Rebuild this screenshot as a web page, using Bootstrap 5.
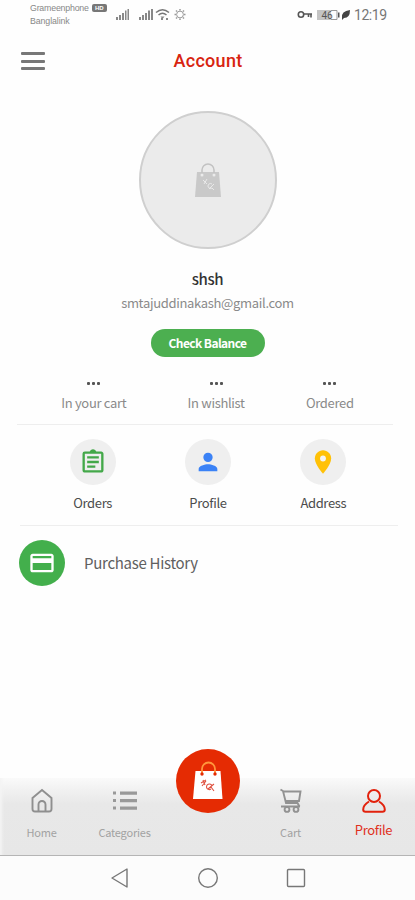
<!DOCTYPE html>
<html lang="en">
<head>
<meta charset="utf-8">
<meta name="viewport" content="width=device-width, initial-scale=1">
<title>Account</title>
<link href="https://cdn.jsdelivr.net/npm/bootstrap@5.3.0/dist/css/bootstrap.min.css" rel="stylesheet">
<style>
body{font-family:"Noto Sans CJK SC","Noto Sans",sans-serif;background:#fefefe;color:#4c4c4c;height:900px;overflow:hidden;line-height:20px}
svg{display:block;flex:none}
.status{height:30px;padding:0 29px 0 30px;font-family:Roboto,sans-serif;color:#777}
.carrier{font:8.8px/12px "Liberation Sans",sans-serif;color:#888;padding-top:2px;width:86px}
.operator{letter-spacing:-.2px}
.carrier>div+div{margin-top:1px;letter-spacing:-.1px}
.volte{font-size:6px;line-height:8px;background:#777;color:#fff;border-radius:2px;width:15px;margin-left:3px;text-align:center;font-weight:700}
.clock{font-size:14px;line-height:30px;width:32px;letter-spacing:-.45px;color:#777}
.topbar{height:62px;padding-left:21px}
.topbar h1{font:500 18px/62px Roboto,sans-serif;color:#d82410;letter-spacing:.3px;margin:0 0 0 -23px;padding-right:21px}
.bars{width:24px}
.bars i{display:block;height:3px;border-radius:1px;background:#777}
.bars i+i{margin-top:4.5px}
.avatar{width:138px;height:138px;margin-top:19px;background:#ebebeb;border:2px solid #cfcfcf}
.uname{font-size:15px;font-weight:500;color:#333;margin-top:20px;letter-spacing:-.35px}
.email{font-size:13px;color:#8a8a8a;margin-top:4px;letter-spacing:-.32px}
.balance{width:114px;height:28px;margin-top:16px;background:#4caf50;color:#fff;font-size:12px;font-weight:700;line-height:28px;letter-spacing:-.6px}
.stats{height:67px;padding-top:25px;font-size:13px;color:#8a8a8a;letter-spacing:-.32px}
.dots{gap:2px;height:6px;margin-bottom:5px}
.dots i{width:3px;height:3px;background:#555;border-radius:1px}
.rule{height:1px;background:#eee}
.actions{height:100px;padding:14px 34px 0 35px;font-size:13px;letter-spacing:-.35px}
.round{width:46px;height:46px}
.soft{background:#efefef}
.green{background:#43af4c}
.history{height:74px;padding-left:19px;font-size:15px;color:#606060;gap:19px;letter-spacing:-.29px}
.tabs{height:78px;background:linear-gradient(#fafafa,#f1f1f1 12px,#e8e8e8 26px,#e7e7e7);border-bottom:1px solid #b5b5b5;font-size:11px;color:#a2a2a2;letter-spacing:-.2px;box-shadow:inset 5px 0 3px -3px #f4f4f4}
.tab{width:83px;padding-top:10px}
.tab svg{height:25px}
.tab span{margin-top:9px}
.tab.on{color:#e0301c;font-size:13px;letter-spacing:-.35px}
.tab.on span{margin-top:7px}
.fab{width:64px;height:64px;background:#e52b03;margin-top:-29px}
.tab .fab svg{height:40px}
.sys{height:44px;background:#fcfcfc;padding-left:1px}
.sys svg{width:88px;height:24px}
</style>
</head>
<body>
<div class="d-flex flex-column h-100">
  <div class="status d-flex align-items-start">
    <div class="carrier"><div class="d-flex align-items-center"><span class="operator">Grameenphone</span><span class="volte">HD</span></div><div>Banglalink</div></div>
    <svg width="70" height="30" fill="#888"><path d="M0 17h2v3H0zM3 15h2v5H3zM6 13h2v7H6zM9 10.500h1.500V20H9zM11.500 9h1.500v11h-1.500zM23 17h2v3h-2zM26 15h2v5h-2zM29 13h2v7h-2zM32 10.500h2V20h-2zM35 9h2v11h-2z"/><g fill="none" stroke="#777" stroke-width="1.500"><path d="M40 12.500q6.500-5.500 13 0M42.500 15q4-3.500 8 0"/><circle cx="64" cy="14.500" r="3.400" stroke="#999" stroke-width="1"/><path d="M64 9v1.500M64 18.500V20M58.500 14.500H60M68 14.500h1.500M60 10.500l1 1M67 17.500l1 1M68 10.500l-1 1M61 17.500l-1 1" stroke="#999"/></g><path d="M44.500 16.500h4l-2 2.500zM45 18h2v2h-2zM50 18h2v2h-2z"/></svg>
    <svg class="ms-auto" width="57" height="30"><g fill="none" stroke="#555" stroke-width="1.600"><circle cx="4" cy="14.500" r="2.700"/><path d="M7 14h8M11.500 14v3M14 14v3.500"/></g><path d="M20 10h14v10H20z" fill="#c4c4c4"/><path d="M34 10.500h6v9h-6" fill="none" stroke="#999"/><path d="M41 12.500h1.500v5H41z" fill="#555"/><text x="24.500" y="18.500" font-size="10" font-family="Roboto" fill="#555">46</text><path d="M45 18q-1-7 8-8 0 8-6 8l-2 2z" fill="#444"/></svg>
    <span class="clock">12:19</span>
  </div>
  <div class="topbar d-flex align-items-center">
    <div class="bars"><i></i><i></i><i></i></div>
    <h1 class="flex-grow-1 text-center">Account</h1>
  </div>
  <div class="d-flex flex-column align-items-center">
    <div class="avatar rounded-circle d-flex justify-content-center align-items-center">
      <svg width="26" height="36" viewBox="0 0 26 36"><path d="M2 10h22l2 25H0z" fill="#c9c9c9"/><path d="M7 12V8a6 6 0 0 1 12 0v4" fill="none" stroke="#c2c2c2" stroke-width="1.500"/><g fill="#ebebeb"><circle cx="7" cy="13" r="1.500"/><circle cx="19" cy="13" r="1.500"/></g><path d="M8 18l4 4M12 17l-3 5M17 22a2.500 2.500 0 1 0 0 4l2 2M19 22l-5 5" fill="none" stroke="#e9e9e9"/></svg>
    </div>
    <div class="uname">shsh</div>
    <div class="email">smtajuddinakash@gmail.com</div>
    <a class="balance btn rounded-pill border-0 p-0">Check Balance</a>
  </div>
  <div class="stats d-flex justify-content-evenly text-center">
    <div><div class="dots d-flex justify-content-center"><i></i><i></i><i></i></div>In your cart</div>
    <div><div class="dots d-flex justify-content-center"><i></i><i></i><i></i></div>In wishlist</div>
    <div><div class="dots d-flex justify-content-center"><i></i><i></i><i></i></div>Ordered</div>
  </div>
  <div class="rule" style="margin:0 22px 0 17px"></div>
  <div class="actions d-flex">
    <div class="col d-flex flex-column align-items-center"><div class="round soft rounded-circle d-flex align-items-center justify-content-center mb-2">
      <svg width="28" height="28" viewBox="0 0 24 24" fill="#43a849"><path d="M7 15h7v2H7zm0-4h10v2H7zm0-4h10v2H7zm12-4h-4.180C14.400 1.840 13.300 1 12 1s-2.400.84-2.820 2H5a2 2 0 0 0-2 2v14c0 1.100.9 2 2 2h14c1.100 0 2-.9 2-2V5c0-1.100-.9-2-2-2zm0 16H5V5h14z"/></svg></div>Orders</div>
    <div class="col d-flex flex-column align-items-center"><div class="round soft rounded-circle d-flex align-items-center justify-content-center mb-2">
      <svg width="28" height="28" viewBox="0 0 24 24" fill="#3b82f6"><path d="M12 12a4 4 0 1 0 0-8 4 4 0 0 0 0 8zm0 2c-2.670 0-8 1.340-8 4v2h16v-2c0-2.660-5.330-4-8-4z"/></svg></div>Profile</div>
    <div class="col d-flex flex-column align-items-center"><div class="round soft rounded-circle d-flex align-items-center justify-content-center mb-2">
      <svg width="28" height="28" viewBox="0 0 24 24" fill="#ffc107"><path d="M12 2C8.130 2 5 5.130 5 9c0 5.250 7 13 7 13s7-7.750 7-13c0-3.870-3.130-7-7-7z"/><circle cx="12" cy="9" r="2.500" fill="#f4f4f4"/></svg></div>Address</div>
  </div>
  <div class="rule" style="margin:0 17px 0 20px"></div>
  <div class="history d-flex align-items-center">
    <div class="round green rounded-circle d-flex align-items-center justify-content-center"><svg width="28" height="28" viewBox="0 0 24 24" fill="#fff"><path d="M20 4H4c-1.110 0-2 .89-2 2v12c0 1.110.89 2 2 2h16c1.110 0 2-.89 2-2V6c0-1.110-.89-2-2-2zm0 14H4v-6h16v6zm0-10H4V6h16v2z"/></svg></div>
    <span>Purchase History</span>
  </div>
  <div class="tabs d-flex mt-auto">
    <div class="tab d-flex flex-column align-items-center"><svg width="24" viewBox="0 0 24 25" fill="none" stroke="#8f8f8f" stroke-width="1.900"><path d="M2.500 10 12 2l9.500 8v11q0 2.500-2.500 2.500H5Q2.500 23.500 2.500 21z"/><path d="M8.500 23v-6.500a3.500 3.500 0 0 1 7 0V23"/></svg><span>Home</span></div>
    <div class="tab d-flex flex-column align-items-center"><svg width="24" viewBox="0 0 24 25" fill="#999"><path d="M0 3.500h3v3H0zM7 3.500h17v3.200H7zM0 11h3v3H0zM7 11h17v3.200H7zM0 18.500h3v3H0zM7 18.500h17v3.200H7z"/></svg><span>Categories</span></div>
    <div class="tab pt-0 d-flex justify-content-center align-items-start"><div class="fab rounded-circle d-flex justify-content-center align-items-center">
      <svg width="30" viewBox="0 0 30 40"><path d="M2.500 10h25L29.500 38H0z" fill="#fff"/><path d="M9 12V8a6.500 6.500 0 0 1 13 0v4" fill="none" stroke="#ff963c" stroke-width="1.800"/><g fill="#e52b03"><circle cx="9" cy="13" r="1.700"/><circle cx="22" cy="13" r="1.700"/></g><path d="M8 22l5-3M10 19l2 5M13 20l-4 5M19 25a2.800 2.800 0 1 0-1 3M15 28l6-5M18 26l3 4" fill="none" stroke="#df5140" stroke-width="1.100"/></svg></div></div>
    <div class="tab d-flex flex-column align-items-center"><svg width="24" viewBox="0 0 24 25" fill="none" stroke="#929292" stroke-width="1.900"><path d="M1.500 1.500 4 3l3 12h11.500l2 3.500M4 3.500h17.500L20 13H6.500M2 18.500h19"/><circle cx="8" cy="21.500" r="2.400"/><circle cx="17" cy="21.500" r="2.400"/></svg><span>Cart</span></div>
    <div class="tab on d-flex flex-column align-items-center"><svg width="24" viewBox="0 0 24 25" fill="none" stroke="#e2210c" stroke-width="2"><circle cx="12" cy="8" r="6"/><path d="M7 13.500Q1.200 17 1.200 21.500 1.200 23.700 3.500 23.700h17q2.300 0 2.300-2.200Q22.800 17 17 13.500"/></svg><span>Profile</span></div>
  </div>
  <div class="sys d-flex justify-content-center align-items-center">
    <svg viewBox="0 0 88 24" fill="none" stroke="#777" stroke-width="1.400"><path d="M51 3v18L36 12z" stroke-linejoin="round"/></svg>
    <svg viewBox="0 0 88 24" fill="none" stroke="#777" stroke-width="1.400"><circle cx="44" cy="12" r="9.300"/></svg>
    <svg viewBox="0 0 88 24" fill="none" stroke="#777" stroke-width="1.400"><rect x="35.500" y="3.500" width="17" height="17" rx="1"/></svg>
  </div>
</div>
<script src="https://cdn.jsdelivr.net/npm/bootstrap@5.3.0/dist/js/bootstrap.bundle.min.js"></script>
</body>
</html>
